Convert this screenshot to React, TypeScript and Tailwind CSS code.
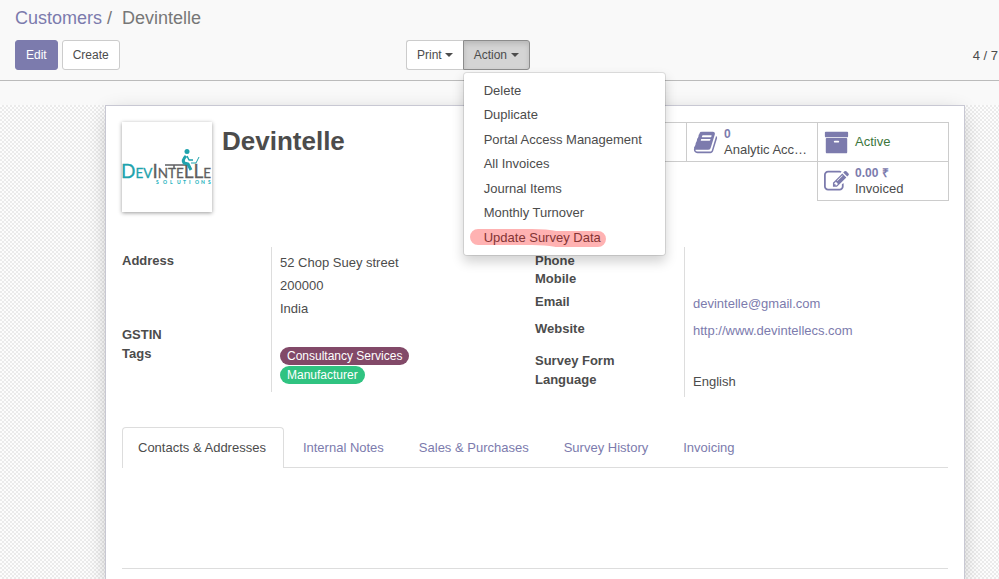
import type { ReactNode } from "react";

const ICONS = {
  book: "M1703 478q40 57 18 129l-275 906q-19 64-76.5 107.5t-122.5 43.5h-923q-77 0-148.5-53.5t-99.5-131.5q-24-67-2-127 0-4 3-27t4-37q1-8-3-21.5t-3-19.5q2-11 8-21t16.5-23.5 16.5-23.5q23-38 45-91.5t30-91.5q3-10 .5-30t-.5-28q3-11 17-28t17-23q21-36 42-92t25-90q1-9-2.5-32t.5-28q4-13 22-30.5t22-22.5q19-26 42.5-84.5t27.5-96.5q1-8-3-25.5t-2-26.5q2-8 9-18t18-23 17-21q8-12 16.5-30.5t15-35 16-36 19.5-32 26.5-23.5 36-11.5 47.5 5.5l-1 3q38-9 51-9h761q74 0 114 56t18 130l-274 906q-36 119-71.5 153.5t-128.5 34.5h-869q-27 0-38 15-11 16-1 43 24 70 144 70h923q29 0 56-15.5t35-41.5l300-987q7-22 5-57 38 15 59 43zm-1064 2q-4 13 2 22.5t20 9.5h608q13 0 25.5-9.5t16.5-22.5l21-64q4-13-2-22.5t-20-9.5h-608q-13 0-25.5 9.5t-16.5 22.5zm-83 256q-4 13 2 22.5t20 9.5h608q13 0 25.5-9.5t16.5-22.5l21-64q4-13-2-22.5t-20-9.5h-608q-13 0-25.5 9.5t-16.5 22.5z",
  archive:
    "M1088 832q0-26-19-45t-45-19h-256q-26 0-45 19t-19 45 19 45 45 19h256q26 0 45-19t19-45zm576-192v960q0 26-19 45t-45 19h-1408q-26 0-45-19t-19-45v-960q0-26 19-45t45-19h1408q26 0 45 19t19 45zm64-448v256q0 26-19 45t-45 19h-1536q-26 0-45-19t-19-45v-256q0-26 19-45t45-19h1536q26 0 45 19t19 45z",
  edit: "M888 1184l116-116-152-152-116 116v56h96v96h56zm440-720q-16-16-33 1l-350 350q-17 17-1 33t33-1l350-350q17-17 1-33zm80 594v190q0 119-84.5 203.5t-203.5 84.5h-832q-119 0-203.5-84.5t-84.5-203.5v-832q0-119 84.5-203.5t203.5-84.5h832q63 0 117 25 15 7 18 23 3 17-9 29l-49 49q-14 14-32 8-23-6-45-6h-832q-66 0-113 47t-47 113v832q0 66 47 113t113 47h832q66 0 113-47t47-113v-126q0-13 9-22l64-64q15-15 35-7t20 29zm-96-738l288 288-672 672h-288v-288zm444 132l-92 92-288-288 92-92q28-28 68-28t68 28l152 152q28 28 28 68t-28 68z",
};

const MENU = [
  "Delete",
  "Duplicate",
  "Portal Access Management",
  "All Invoices",
  "Journal Items",
  "Monthly Turnover",
  "Update Survey Data",
];

const TABS = ["Internal Notes", "Sales & Purchases", "Survey History", "Invoicing"];

function Caret() {
  return <span className="border-x-4 border-t-4 border-x-transparent border-t-[#4c4c4c]" />;
}

function StatButton({ icon, className = "", children }: { icon?: string; className?: string; children?: ReactNode }) {
  return (
    <button
      type="button"
      className={`-mb-px -ml-px flex h-10 items-center border border-[#cccccc] pl-1.5 text-left ${className}`}
    >
      {icon && (
        <svg viewBox="0 0 1792 1792" className="mr-1.5 h-[25px] w-[25px] shrink-0 fill-[#7c7bad]" aria-hidden="true">
          <path d={icon} />
        </svg>
      )}
      <span className="min-w-0 leading-4">{children}</span>
    </button>
  );
}

function Row({ label, row = "", labelPad = "", children }: { label: string; row?: string; labelPad?: string; children?: ReactNode }) {
  return (
    <div className={`flex ${row}`}>
      <dt className={`w-[149px] shrink-0 font-bold leading-5 ${labelPad}`}>{label}</dt>
      <dd className="min-w-0 flex-1 border-l border-[#dddddd] pl-2">{children}</dd>
    </div>
  );
}

function Logo() {
  return (
    <svg viewBox="0 0 90 90" className="h-[90px] w-[90px] shrink-0 bg-white shadow-[0_1px_4px_rgba(0,0,0,0.4)]" role="img" aria-label="DevIntelle Solutions">
      <g fontFamily="Lato, sans-serif">
        <text x="-1" y="56" fontSize="19" fill="#1fa3ad" stroke="#1fa3ad" strokeWidth="0.3">
          D<tspan fontSize="13.500">EV</tspan>
          <tspan fill="#5f5f61" stroke="#5f5f61">I</tspan>
          <tspan fill="#5f5f61" stroke="#5f5f61" fontSize="13.500">NTE</tspan>
          <tspan fill="#5f5f61" stroke="#5f5f61">LL</tspan>
          <tspan fill="#5f5f61" stroke="#5f5f61" fontSize="13.500">E</tspan>
        </text>
        <text x="34 41 48 55 61 67 73 79 86" y="62" fontSize="5" fontWeight="900" fill="#27b3be">SOLUTIONS</text>
      </g>
      <path d="M43 43H67M52 43V47" stroke="#5f5f61" strokeWidth="1.500" fill="none" />
      <circle cx="65" cy="29.500" r="2.500" fill="#1fa3ad" />
      <path d="M64 34Q60 38 62 41L66 42 69 48" stroke="#1fa3ad" strokeWidth="3" fill="none" strokeLinejoin="round" />
      <path d="M65 34L67 38 71 38" stroke="#1fa3ad" strokeWidth="1.500" fill="none" strokeLinejoin="round" />
      <path d="M69 41h5l3-6" stroke="#1fa3ad" strokeWidth="1" fill="none" />
    </svg>
  );
}

export default function App() {
  return (
    <div className="flex h-screen flex-col overflow-hidden bg-[#f9f9f9] font-['Liberation_Sans',Arial,sans-serif] text-[13px] text-[#4c4c4c]">
      <header className="h-[81px] shrink-0 border-b border-[#bbbbbb] px-[15px] pt-1.5">
        <nav aria-label="Breadcrumb" className="flex gap-[5px] text-lg leading-6">
          <a href="#customers" className="text-[#7c7bad]">Customers</a>
          <span className="text-[#777777]">/</span>
          <span className="ml-[5px] text-[#777777]">Devintelle</span>
        </nav>
        <div className="mt-2.5 flex items-center text-xs">
          <div className="flex w-[391px] gap-1">
            <button type="button" className="h-[30px] rounded-[3px] border border-[#7c7bad] bg-[#7c7bad] px-2.5 text-white">Edit</button>
            <button type="button" className="h-[30px] rounded-[3px] border border-[#cccccc] bg-white px-2.5">Create</button>
          </div>
          <div className="flex">
            <button type="button" className="flex h-[30px] items-center gap-[3px] rounded-l-[3px] border border-r-0 border-[#cccccc] bg-white px-2.5">
              Print
              <Caret />
            </button>
            <div className="relative">
              <button type="button" aria-expanded="true" className="flex h-[30px] items-center gap-1 rounded-r-[3px] border border-[#8c8c8c] bg-[#d4d4d4] px-2.5 shadow-[inset_0_3px_5px_rgba(0,0,0,0.125)]">
                Action
                <Caret />
              </button>
              <ul className="absolute left-0 top-full z-10 mt-0.5 grid h-[184px] w-[203px] auto-rows-fr rounded border border-black/10 bg-white bg-clip-padding py-[5px] text-[13px] shadow-[0_6px_12px_rgba(0,0,0,0.175)]">
                {MENU.map((item, i) => (
                  <li key={item} className="relative flex items-center pl-5">
                    <button type="button">{item}</button>
                    {i === MENU.length - 1 && (
                      <svg viewBox="0 0 137 20" className="absolute left-1.5 top-1 h-5 w-[137px]" aria-hidden="true">
                        <path d="M8 8H62Q76 8 86 10H128" stroke="#ff0000" strokeOpacity="0.3" strokeWidth="16" strokeLinecap="round" fill="none" />
                      </svg>
                    )}
                  </li>
                ))}
              </ul>
            </div>
          </div>
          <span className="-mr-3.5 ml-auto pt-0.5 text-[13px]">4 / 7</span>
        </div>
      </header>

      <main className="flex min-h-0 flex-1 flex-col overflow-hidden pt-6">
        <div className="flex flex-1 flex-col bg-[repeating-conic-gradient(#ebebeb_0_25%,#fdfdfd_0_50%)] bg-[length:4px_4px] pl-[105px] pr-[34px]">
          <section className="flex-1 border border-b-0 border-[#c8c8d3] bg-white p-4 shadow-[0_5px_20px_-5px_rgba(0,0,0,0.3)]">
            <div className="flex h-[125px] items-start">
              <Logo />
              <h1 className="ml-2.5 mt-[3px] text-[26px] font-bold leading-8">Devintelle</h1>
              <div className="-mr-px ml-auto grid grid-cols-[131px_131px_131px]">
                <StatButton />
                <StatButton icon={ICONS.book}>
                  <b className="block text-xs leading-4 text-[#7c7bad]">0</b>
                  <span className="block">Analytic Acc…</span>
                </StatButton>
                <StatButton icon={ICONS.archive}>
                  <span className="text-[#3c763d]">Active</span>
                </StatButton>
                <StatButton icon={ICONS.edit} className="col-start-3">
                  <b className="block text-xs leading-4 text-[#7c7bad]">0.00 ₹</b>
                  <span className="block">Invoiced</span>
                </StatButton>
              </div>
            </div>

            <div className="grid grid-cols-2 items-start">
              <dl>
                <Row label="Address" row="h-[78px]" labelPad="pt-1">
                  <div className="pt-1 leading-[23px]">
                    52 Chop Suey street
                    <br />
                    200000
                    <br />
                    India
                  </div>
                </Row>
                <Row label="GSTIN" row="h-[19px]" />
                <Row label="Tags" row="h-12">
                  <div className="flex flex-col items-start gap-px pt-[3px] text-xs leading-[18px] text-white">
                    <span className="rounded-full bg-[#824968] px-[7px]">Consultancy Services</span>
                    <span className="rounded-full bg-[#30c381] px-[7px]">Manufacturer</span>
                  </div>
                </Row>
              </dl>
              <dl>
                <Row label="Phone" row="h-[22px]" labelPad="pt-1" />
                <Row label="Mobile" row="h-[18px]" />
                <Row label="Email" row="h-[27px]" labelPad="pt-[5px]">
                  <a href="mailto:devintelle@gmail.com" className="block pt-[7px] leading-5 text-[#7c7bad]">devintelle@gmail.com</a>
                </Row>
                <Row label="Website" row="h-8" labelPad="pt-[5px]">
                  <a href="#website" className="block pt-[7px] leading-5 text-[#7c7bad]">http://www.devintellecs.com</a>
                </Row>
                <Row label="Survey Form" row="h-6" labelPad="pt-[5px]" />
                <Row label="Language" row="h-[27px]">
                  <span className="block pt-0.5 leading-5">English</span>
                </Row>
              </dl>
            </div>

            <div role="tablist" className="mt-[30px] flex gap-[3px] border-b border-[#dddddd]">
              <button type="button" role="tab" aria-selected="true" className="-mb-px h-[41px] rounded-t border border-b-0 border-[#dddddd] bg-white pl-[15px] pr-[17px]">
                Contacts &amp; Addresses
              </button>
              {TABS.map((tab) => (
                <button key={tab} type="button" role="tab" aria-selected="false" className="h-10 px-4 pt-px text-[#7c7bad]">
                  {tab}
                </button>
              ))}
            </div>
            <div role="tabpanel" className="h-[101px] border-b border-[#dddddd]" />
          </section>
        </div>
      </main>
    </div>
  );
}
